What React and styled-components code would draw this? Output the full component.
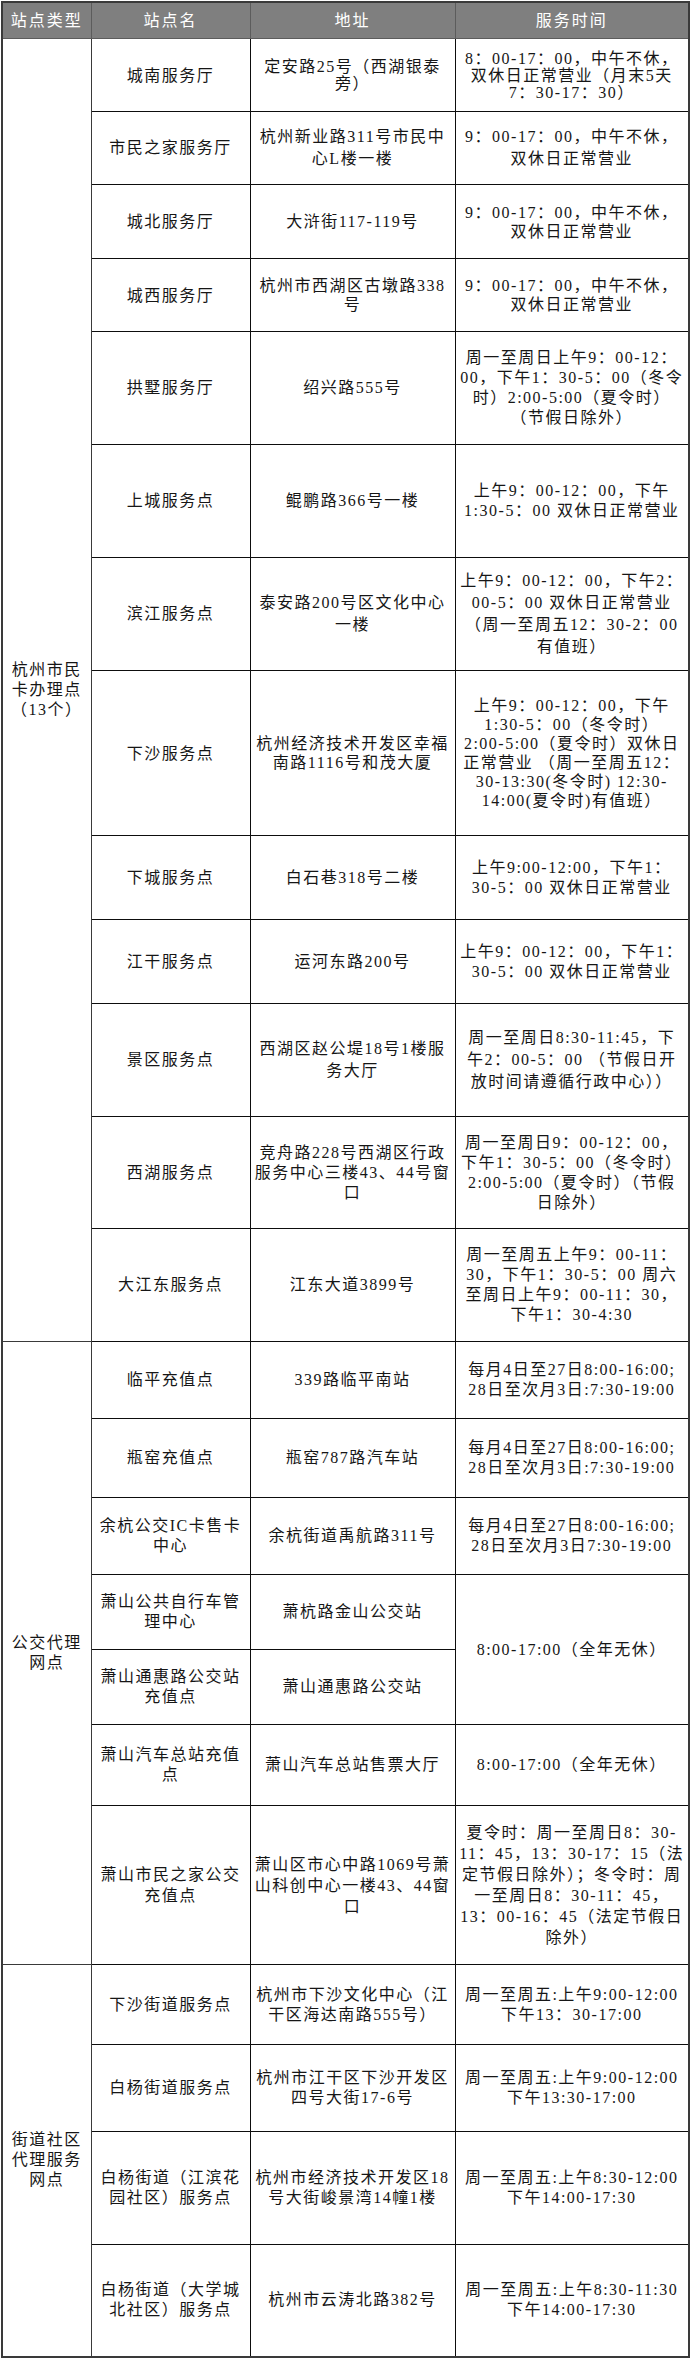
import React from 'react';
import styled, { createGlobalStyle } from 'styled-components';

const GlobalStyle = createGlobalStyle`
  html, body {
    margin: 0;
    padding: 0;
    background: #ffffff;
  }
  body {
    font-family: "Liberation Serif", "Noto Sans CJK SC", serif;
  }
`;

const Table = styled.table`
  margin: 1px 0 0 1px;
  width: 687px;
  table-layout: fixed;
  border-collapse: collapse;
  border: 2px solid #3a3a3a;
  color: #161616;
  font-size: 16px;
  letter-spacing: 1.5px;
  line-height: 20px;
`;

const Head = styled.th`
  height: 35px;
  padding: 0;
  background: #7f7f7f;
  color: #ffffff;
  font-weight: normal;
  font-size: 16px;
  letter-spacing: 2px;
  border: 1px solid #5c5c5c;
  text-align: center;
  vertical-align: middle;
`;

const Row = styled.tr`
  height: ${(p) => p.$h}px;
`;

const Cell = styled.td`
  padding: 0 2px;
  border: 1px solid #0d0d0d;
  text-align: center;
  vertical-align: middle;
  white-space: pre;
  line-height: ${(p) => p.$lh || 20}px;
`;

const TypeCell = styled(Cell)`
  border-color: #3a3a3a;
`;

const groups = [
  {
    type: '杭州市民\n卡办理点\n（13个）',
    rows: [
      { h: 73, lh: 17, name: '城南服务厅', addr: '定安路25号（西湖银泰\n旁）', time: '8：00-17：00，中午不休，\n双休日正常营业（月末5天\n7：30-17：30）' },
      { h: 73, lh: 22, name: '市民之家服务厅', addr: '杭州新业路311号市民中\n心L楼一楼', time: '9：00-17：00，中午不休，\n双休日正常营业' },
      { h: 74, lh: 19, name: '城北服务厅', addr: '大浒街117-119号', time: '9：00-17：00，中午不休，\n双休日正常营业' },
      { h: 73, lh: 19, name: '城西服务厅', addr: '杭州市西湖区古墩路338\n号', time: '9：00-17：00，中午不休，\n双休日正常营业' },
      { h: 113, name: '拱墅服务厅', addr: '绍兴路555号', time: '周一至周日上午9：00-12：\n00，下午1：30-5：00（冬令\n时）2:00-5:00（夏令时）\n（节假日除外）' },
      { h: 113, name: '上城服务点', addr: '鲲鹏路366号一楼', time: '上午9：00-12：00，下午\n1:30-5：00 双休日正常营业' },
      { h: 113, lh: 22, name: '滨江服务点', addr: '泰安路200号区文化中心\n一楼', time: '上午9：00-12：00，下午2：\n00-5：00 双休日正常营业\n（周一至周五12：30-2：00\n有值班）' },
      { h: 165, lh: 19, name: '下沙服务点', addr: '杭州经济技术开发区幸福\n南路1116号和茂大厦', time: '上午9：00-12：00，下午\n1:30-5：00（冬令时）\n2:00-5:00（夏令时）双休日\n正常营业 （周一至周五12：\n30-13:30(冬令时) 12:30-\n14:00(夏令时)有值班）' },
      { h: 84, name: '下城服务点', addr: '白石巷318号二楼', time: '上午9:00-12:00，下午1：\n30-5：00 双休日正常营业' },
      { h: 84, name: '江干服务点', addr: '运河东路200号', time: '上午9：00-12：00，下午1：\n30-5：00 双休日正常营业' },
      { h: 113, lh: 22, name: '景区服务点', addr: '西湖区赵公堤18号1楼服\n务大厅', time: '周一至周日8:30-11:45，下\n午2：00-5：00 （节假日开\n放时间请遵循行政中心））' },
      { h: 112, name: '西湖服务点', addr: '竞舟路228号西湖区行政\n服务中心三楼43、44号窗\n口', time: '周一至周日9：00-12：00，\n下午1：30-5：00（冬令时）\n2:00-5:00（夏令时）（节假\n日除外）' },
      { h: 113, name: '大江东服务点', addr: '江东大道3899号', time: '周一至周五上午9：00-11：\n30，下午1：30-5：00 周六\n至周日上午9：00-11：30，\n下午1：30-4:30' },
    ],
  },
  {
    type: '公交代理\n网点',
    rows: [
      { h: 77, name: '临平充值点', addr: '339路临平南站', time: '每月4日至27日8:00-16:00;\n28日至次月3日:7:30-19:00' },
      { h: 79, name: '瓶窑充值点', addr: '瓶窑787路汽车站', time: '每月4日至27日8:00-16:00;\n28日至次月3日:7:30-19:00' },
      { h: 77, name: '余杭公交IC卡售卡\n中心', addr: '余杭街道禹航路311号', time: '每月4日至27日8:00-16:00;\n28日至次月3日7:30-19:00' },
      { h: 75, name: '萧山公共自行车管\n理中心', addr: '萧杭路金山公交站', time: '8:00-17:00（全年无休）', span: 2 },
      { h: 75, name: '萧山通惠路公交站\n充值点', addr: '萧山通惠路公交站', time: null },
      { h: 81, name: '萧山汽车总站充值\n点', addr: '萧山汽车总站售票大厅', time: '8:00-17:00（全年无休）' },
      { h: 159, lh: 21, name: '萧山市民之家公交\n充值点', addr: '萧山区市心中路1069号萧\n山科创中心一楼43、44窗\n口', time: '夏令时：周一至周日8：30-\n11：45，13：30-17：15（法\n定节假日除外）；冬令时：周\n一至周日8：30-11：45，\n13：00-16：45（法定节假日\n除外）' },
    ],
  },
  {
    type: '街道社区\n代理服务\n网点',
    rows: [
      { h: 80, name: '下沙街道服务点', addr: '杭州市下沙文化中心（江\n干区海达南路555号）', time: '周一至周五:上午9:00-12:00\n下午13：30-17:00' },
      { h: 87, name: '白杨街道服务点', addr: '杭州市江干区下沙开发区\n四号大街17-6号', time: '周一至周五:上午9:00-12:00\n下午13:30-17:00' },
      { h: 113, name: '白杨街道（江滨花\n园社区）服务点', addr: '杭州市经济技术开发区18\n号大街峻景湾14幢1楼', time: '周一至周五:上午8:30-12:00\n下午14:00-17:30' },
      { h: 112, name: '白杨街道（大学城\n北社区）服务点', addr: '杭州市云涛北路382号', time: '周一至周五:上午8:30-11:30\n下午14:00-17:30' },
    ],
  },
];

export default function App() {
  return (
    <>
      <GlobalStyle />
      <Table>
        <colgroup>
          <col style={{ width: 89 }} />
          <col style={{ width: 159 }} />
          <col style={{ width: 205 }} />
          <col style={{ width: 234 }} />
        </colgroup>
        <thead>
          <tr>
            <Head>站点类型</Head>
            <Head>站点名</Head>
            <Head>地址</Head>
            <Head>服务时间</Head>
          </tr>
        </thead>
        <tbody>
          {groups.map((g) =>
            g.rows.map((r, i) => (
              <Row key={g.type + r.name} $h={r.h}>
                {i === 0 && (
                  <TypeCell rowSpan={g.rows.length} $lh={20}>
                    {g.type}
                  </TypeCell>
                )}
                <Cell $lh={r.lh}>{r.name}</Cell>
                <Cell $lh={r.lh}>{r.addr}</Cell>
                {r.time !== null && (
                  <Cell rowSpan={r.span || 1} $lh={r.lh}>
                    {r.time}
                  </Cell>
                )}
              </Row>
            ))
          )}
        </tbody>
      </Table>
    </>
  );
}
